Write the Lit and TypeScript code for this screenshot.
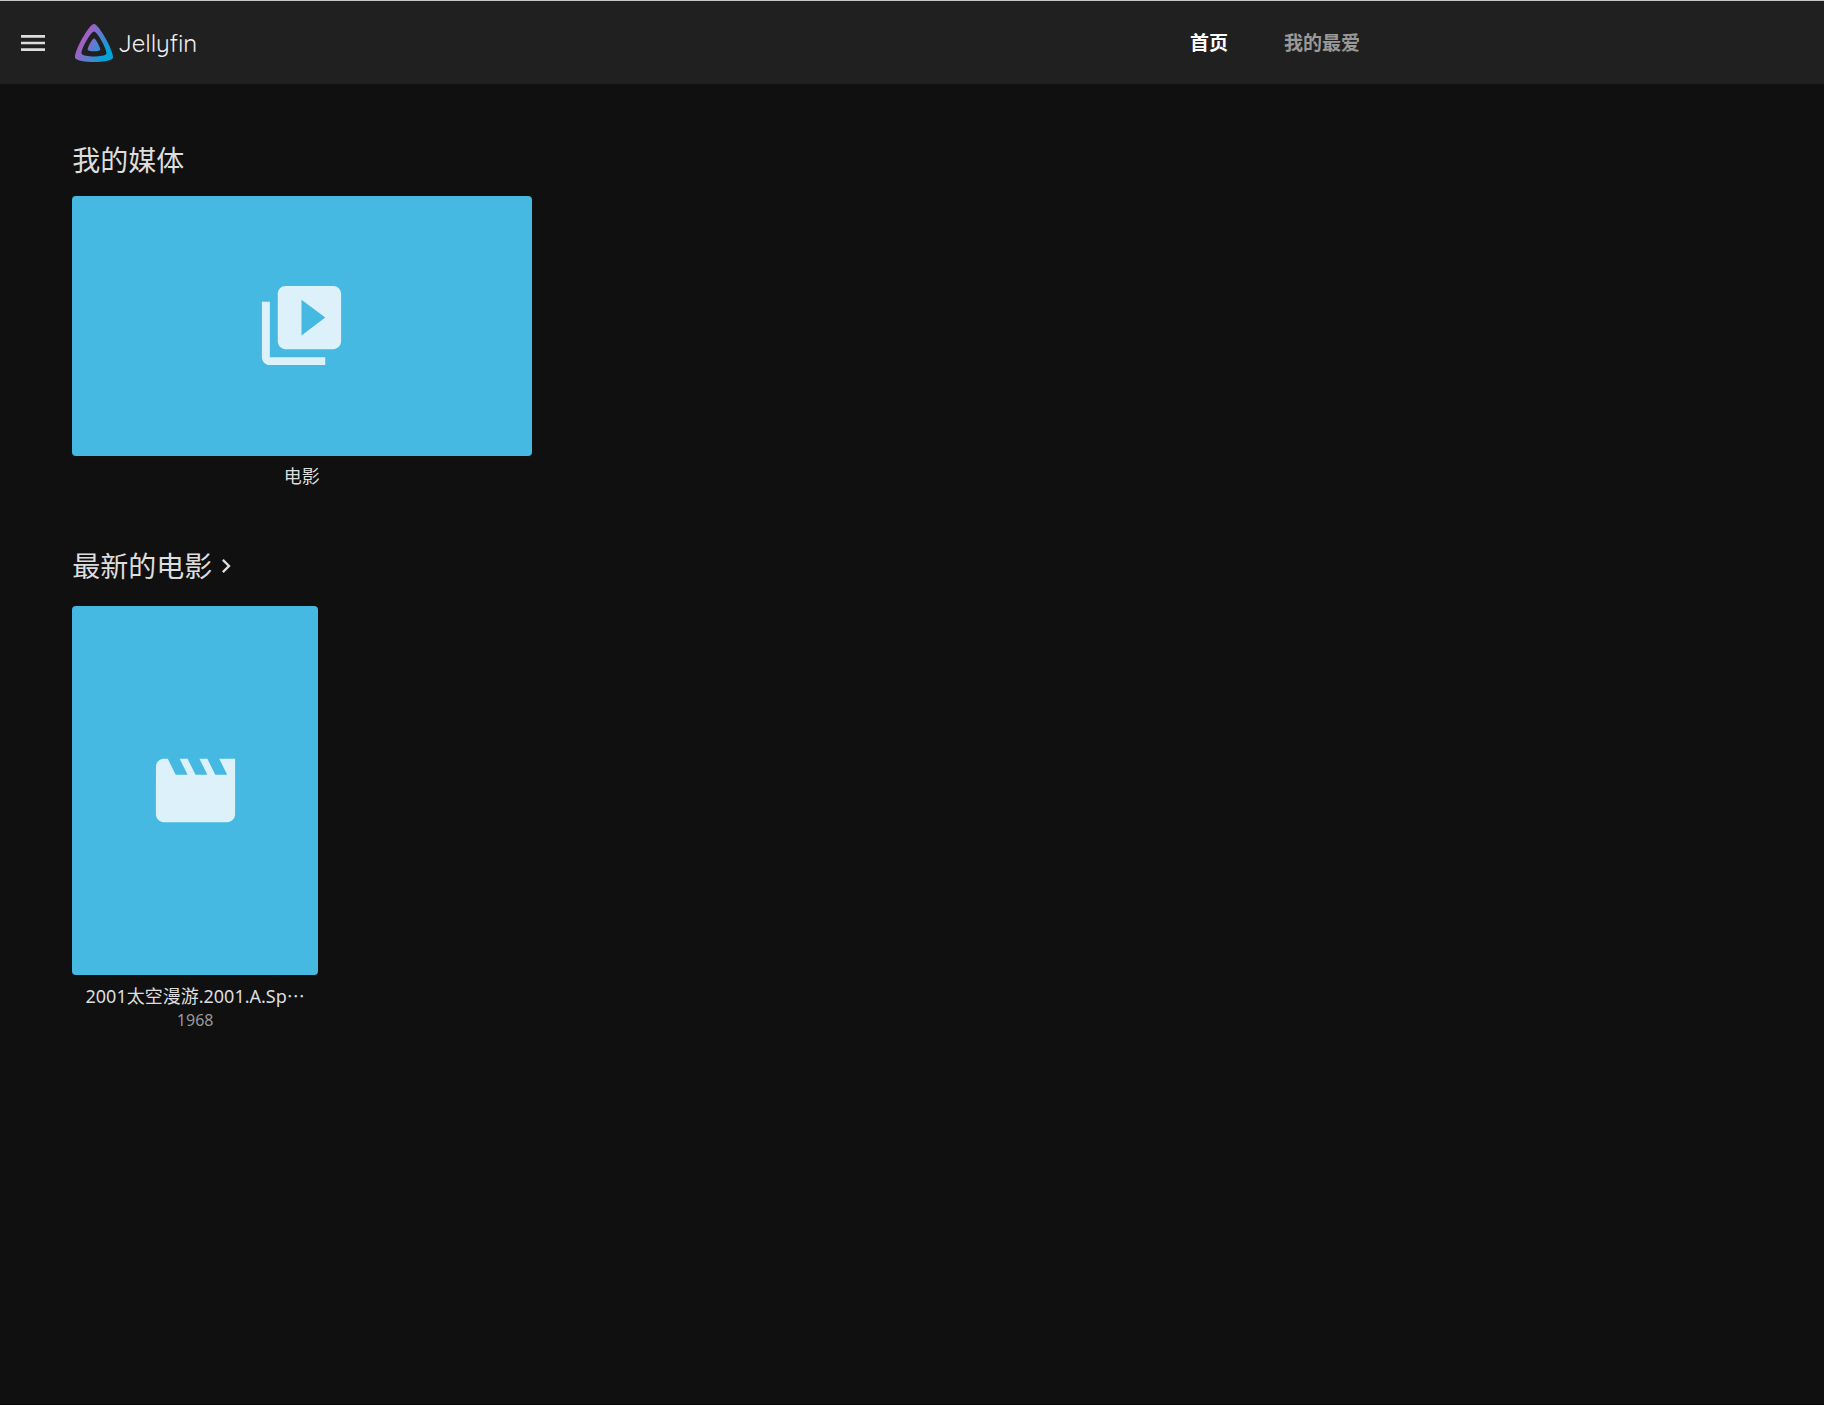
import { LitElement, html, css, svg } from "lit";
import { customElement } from "lit/decorators.js";

interface MediaCard {
  title: string;
  clipped?: boolean;
  year?: string;
  shape: "backdrop" | "portrait";
  icon: "library" | "movie";
}

const paths = {
  menu: "M3 18h18v-2H3v2zm0-5h18v-2H3v2zm0-7v2h18V6H3z",
  chevron: "M10 6L8.59 7.41 13.17 12l-4.58 4.59L10 18l6-6z",
  library:
    "M4 6H2v14c0 1.1.9 2 2 2h14v-2H4V6zm16-4H8c-1.1 0-2 .9-2 2v12c0 1.1.9 2 2 2h12c1.1 0 2-.9 2-2V4c0-1.1-.9-2-2-2zm-8 12.5v-9l6 4.5-6 4.5z",
  movie:
    "M18 4l2 4h-3l-2-4h-2l2 4h-3l-2-4H8l2 4H7L5 4H4c-1.1 0-1.99.9-1.99 2L2 18c0 1.1.9 2 2 2h16c1.1 0 2-.9 2-2V4h-4z",
};

const icon = (name: keyof typeof paths, cls: string) => html`
  <svg class=${cls} viewBox="0 0 24 24" aria-hidden="true">${svg`<path d=${paths[name]} />`}</svg>
`;

@customElement("app-root")
export class AppRoot extends LitElement {
  static styles = css`
    :host {
      display: flex;
      flex-direction: column;
      box-sizing: border-box;
      min-height: 100vh;
      background: #101010;
      color: #dddddd;
      border-top: 1px solid #c4c8c8;
      border-bottom: 1px solid #050505;
      font-family: "Noto Sans", "Noto Sans CJK SC", sans-serif;
      font-size: 19px;
      line-height: 24px;
    }
    a {
      color: inherit;
      text-decoration: none;
    }
    .header {
      display: flex;
      align-items: center;
      justify-content: space-between;
      height: 83px;
      background: #202020;
    }
    .start {
      display: flex;
      align-items: center;
      gap: 26px;
      padding-left: 17px;
    }
    .menu {
      display: flex;
      padding: 0;
      border: 0;
      background: none;
      color: inherit;
      cursor: pointer;
    }
    .menu-icon {
      width: 32px;
      height: 32px;
      fill: currentColor;
    }
    .brand {
      display: flex;
      align-items: center;
      gap: 5px;
      font-family: Quicksand, Lato, sans-serif;
      font-size: 24px;
      font-weight: 400;
      line-height: 38px;
      color: #f0f0f0;
    }
    .logo {
      width: 38px;
      height: 38px;
    }
    .tabs {
      display: flex;
      margin-right: 23.9%;
    }
    .tab {
      padding: 28px;
      font-weight: 700;
      color: #999999;
    }
    .tab.active {
      color: #ffffff;
    }
    .content {
      display: flex;
      flex-direction: column;
      gap: 58px;
      padding: 56px 3.3vw;
    }
    .heading {
      display: flex;
      align-items: center;
      margin: 0 12px 16px;
      font-size: 28px;
      font-weight: 400;
      line-height: 40px;
    }
    .heading.linked {
      margin-bottom: 20px;
    }
    .more {
      display: flex;
      align-items: center;
    }
    .chevron {
      width: 28px;
      height: 28px;
      fill: currentColor;
    }
    .items {
      display: flex;
      flex-wrap: wrap;
    }
    .card {
      box-sizing: border-box;
      padding: 0 12px;
      text-align: center;
    }
    .card.backdrop {
      width: 26.5vw;
    }
    .card.portrait {
      width: 14.8vw;
    }
    .cover {
      display: flex;
      align-items: center;
      justify-content: center;
      margin-bottom: 8px;
      border-radius: 4px;
      background: #46b9e3;
    }
    .backdrop .cover {
      aspect-ratio: 23 / 13;
    }
    .portrait .cover {
      aspect-ratio: 2 / 3;
    }
    .cover-icon {
      width: 95px;
      height: 95px;
      fill: #dcf1fa;
    }
    .title,
    .year {
      white-space: nowrap;
    }
    .title {
      font-size: 18px;
    }
    .clip {
      font-family: "Noto Sans CJK JP", sans-serif;
    }
    .year {
      font-size: 16px;
      color: #999999;
    }
  `;

  private sections: { name: string; link: boolean; cards: MediaCard[] }[] = [
    {
      name: "我的媒体",
      link: false,
      cards: [{ title: "电影", shape: "backdrop", icon: "library" }],
    },
    {
      name: "最新的电影",
      link: true,
      cards: [{ title: "2001太空漫游.2001.A.Sp", clipped: true, year: "1968", shape: "portrait", icon: "movie" }],
    },
  ];

  private renderCard(card: MediaCard) {
    return html`
      <a class="card ${card.shape}" href="#item">
        <div class="cover">${icon(card.icon, "cover-icon")}</div>
        <div class="title">${card.title}${card.clipped ? html`<span class="clip" lang="ja">${"\u22ef"}</span>` : ""}</div>
        ${card.year ? html`<div class="year">${card.year}</div>` : ""}
      </a>
    `;
  }

  render() {
    return html`
      <header class="header">
        <div class="start">
          <button class="menu" type="button" aria-label="菜单">${icon("menu", "menu-icon")}</button>
          <a class="brand" href="#home">
            <svg class="logo" viewBox="0 0 24 24" aria-hidden="true">
              <defs>
                <linearGradient id="brand-fill" gradientUnits="userSpaceOnUse" x1="5" y1="9" x2="21" y2="18">
                  <stop offset="0" stop-color="#aa5cc3" />
                  <stop offset="1" stop-color="#00a4dc" />
                </linearGradient>
              </defs>
              <path
                fill="url(#brand-fill)"
                d="M12 .002C8.826.002-1.398 18.537.16 21.666c1.56 3.129 22.14 3.094 23.682 0C25.384 18.573 15.177 0 12 0zm7.76 18.949c-1.008 2.028-14.493 2.05-15.514 0C3.224 16.9 9.92 4.755 12.003 4.755c2.081 0 8.77 12.166 7.759 14.196zM12 9.198c-1.054 0-4.446 6.15-3.93 7.189.518 1.04 7.348 1.027 7.86 0 .511-1.027-2.874-7.19-3.93-7.19z"
              />
            </svg>
            <span>Jellyfin</span>
          </a>
        </div>
        <nav class="tabs">
          <a class="tab active" href="#home" aria-current="page">首页</a>
          <a class="tab" href="#favorites">我的最爱</a>
        </nav>
      </header>
      <main class="content">
        ${this.sections.map(
          (section) => html`
            <section>
              <h2 class="heading ${section.link ? "linked" : ""}">
                ${section.link
                  ? html`<a class="more" href="#latest">${section.name}${icon("chevron", "chevron")}</a>`
                  : section.name}
              </h2>
              <div class="items">${section.cards.map((card) => this.renderCard(card))}</div>
            </section>
          `,
        )}
      </main>
    `;
  }
}
